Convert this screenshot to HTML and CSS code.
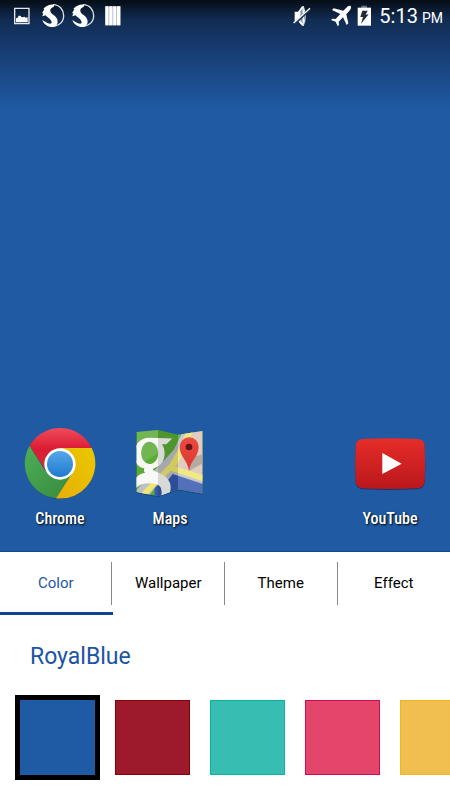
FILE: index.html
```html
<!DOCTYPE html>
<html lang="en">
<head>
    <meta charset="UTF-8">
    <meta name="viewport" content="width=device-width, initial-scale=1.0">
    <title>Launcher Settings</title>
    <link rel="stylesheet" href="styles.css">
</head>
<body>
    <main class="home">
        <header class="status-bar">
            <div class="status-left">
                <!-- screenshot -->
                <svg class="icon-picture" width="16" height="18" viewBox="43 20 48 54">
                    <path fill="none" stroke="#e6e8ec" stroke-width="4" d="M45 24h43v46H45z"/>
                    <path fill="#fff" d="M49 66V54l5-2 3-6h5l3 4 5 1 4-2 4 3 6-1v15z"/>
                </svg>
                <svg width="24" height="24" viewBox="122 12 72 72">
                    <path fill="none" stroke="#dde2ea" stroke-width="4" d="M158 14c20 0 32 16 32 33 0 19-15 32-34 32"/>
                    <path fill="#fff" d="M163 14c-14-2-26 3-34 13l3 1-7 12 4-1-3 10 10-3c6 8 17 12 18 20 1 9-12 5-28-6 4 13 16 21 30 21 14-1 19-13 14-25-5-11-22-14-20-26 1-6 6-8 11-10-2-3-1-4 2-6z"/>
                </svg>
                <svg width="24" height="24" viewBox="122 12 72 72">
                    <path fill="none" stroke="#dde2ea" stroke-width="4" d="M158 14c20 0 32 16 32 33 0 19-15 32-34 32"/>
                    <path fill="#fff" d="M163 14c-14-2-26 3-34 13l3 1-7 12 4-1-3 10 10-3c6 8 17 12 18 20 1 9-12 5-28-6 4 13 16 21 30 21 14-1 19-13 14-25-5-11-22-14-20-26 1-6 6-8 11-10-2-3-1-4 2-6z"/>
                </svg>
                <svg class="icon-bars" width="16" height="20" viewBox="0 0 48 60">
                    <path fill="#b9c1cd" d="M1 1h45v57H1z"/>
                    <path fill="#fff" d="M1 1h9v57H1zM13 1h9v57h-9zM25 1h8v57h-8zM36 1h10v57H36z"/>
                </svg>
            </div>
            <div class="status-right">
                <!-- muted -->
                <svg width="18" height="22" viewBox="44 14 54 66">
                    <path fill="#fff" d="M49 34h10l12-16h6v58h-6L59 62H49z"/>
                    <path fill="#8f9db3" d="M66 33l7-9v46l-7-9z"/>
                    <path fill="none" stroke="#dde2ea" stroke-width="4" d="M75 20q11 27 0 54"/>
                    <path stroke="#14305c" stroke-width="8" d="M48 70l47-44"/>
                    <path stroke="#fff" stroke-width="4" d="M46 68l49-44"/>
                </svg>
                <!-- airplane mode -->
                <svg class="icon-plane" width="20" height="22" viewBox="158 15 60 66">
                    <path fill="#fff" d="M217 18c-5-2-9 1-13 5l-9 9-29-7-5 5 25 12-14 15-10-1-4 4 14 5 6 14 4-4-1-10 13-13 11 23 5-5-6-27 8-9c4-5 8-10 5-16z"/>
                </svg>
                <!-- battery charging -->
                <svg class="icon-battery" width="14" height="22" viewBox="236 13 42 66">
                    <path fill="#68717f" d="M249 15h17v7h-17z"/>
                    <path fill="#fff" d="M238 21h40v54h-40z"/>
                    <path fill="#222a35" d="M252 30h16l-6 12 9-1-23 28 6-20h-8z"/>
                </svg>
                <div class="clock">5:13 <span class="clock-period">PM</span></div>
            </div>
        </header>

        <nav class="apps">
            <a class="app" href="#chrome">
                <svg class="app-icon" viewBox="42 36 216 216">
                    <defs>
                        <linearGradient id="chrome-red" x1="0" y1="0" x2="0" y2="1">
                            <stop offset="0" stop-color="#f04b5a"/>
                            <stop offset=".5" stop-color="#db1c33"/>
                            <stop offset="1" stop-color="#c9303b"/>
                        </linearGradient>
                        <linearGradient id="chrome-green" x1="0" y1="0" x2="1" y2="1">
                            <stop offset="0" stop-color="#4fae55"/>
                            <stop offset="1" stop-color="#358a3d"/>
                        </linearGradient>
                        <linearGradient id="chrome-yellow" x1="0" y1="1" x2="1" y2="0">
                            <stop offset="0" stop-color="#e9ae08"/>
                            <stop offset="1" stop-color="#e9c800"/>
                        </linearGradient>
                        <linearGradient id="chrome-blue" x1="0" y1="0" x2="0" y2="1">
                            <stop offset="0" stop-color="#56a6e8"/>
                            <stop offset="1" stop-color="#1f7bd0"/>
                        </linearGradient>
                    </defs>
                    <circle cx="150" cy="147" r="105" fill="#163f78"/>
                    <path fill="url(#chrome-green)" d="M59 92a105 105 0 0 0 79 158l55-84-43-21-44 23z"/>
                    <path fill="url(#chrome-yellow)" d="M150 99h95a105 105 0 0 1-107 151l53-82z"/>
                    <path fill="url(#chrome-red)" d="M59 92a105 105 0 0 1 186 7h-95l-45 65z"/>
                    <circle cx="150" cy="147" r="47" fill="#fff"/>
                    <circle cx="150" cy="147" r="39" fill="url(#chrome-blue)"/>
                </svg>
                <span class="app-name">Chrome</span>
            </a>
            <a class="app" href="#maps">
                <svg class="app-icon" viewBox="42 36 216 216">
                    <defs>
                        <clipPath id="maps-sheet">
                            <path d="M49 51l65-6 60 14 74-11v188l-74-13-59 21-66-13z"/>
                        </clipPath>
                        <linearGradient id="maps-pin" x1="0" y1="0" x2="0" y2="1">
                            <stop offset="0" stop-color="#ec4a43"/>
                            <stop offset="1" stop-color="#d8382f"/>
                        </linearGradient>
                    </defs>
                    <path fill="#1a4580" d="M49 54l65-6 60 14 75-11v188l-75-13-59 21-66-13z"/>
                    <g clip-path="url(#maps-sheet)">
                        <path fill="#5aaa35" d="M40 40h220v210H40z"/>
                        <path fill="#dcc5b4" d="M160 150l50-110h44v156l-94-36z"/>
                        <path fill="#a89c8f" d="M206 168l18-44 26-6v26z"/>
                        <path fill="#bec0c6" d="M49 225l112-120 30-60h14l-36 84-20 30-60 80H49z"/>
                        <path fill="#3558ae" d="M104 248v-28l44-42 24-4 78 24v50z"/>
                        <path fill="#bec0c6" d="M150 165l100 30v12l-92-30-26 34-10-10z"/>
                        <path fill="#eee66f" d="M58 240l90-92 26-44 28-60h20l-46 98-12 12 86 26v19l-98-32-76 78z"/>
                        <!-- letter on the sheet -->
                        <path fill="#f8f9f6" stroke="#f8f9f6" stroke-width="4" fill-rule="evenodd" d="M88 70l64 2-14 14h-15c15 22 12 62-20 71-10 4-9 10 4 15 32 11 49 30 41 60l-22 10c4-25-6-36-22-38-22-3-42-1-55 12v-27c9-10 20-13 29-14-5-6-5-12-2-17-46-1-44-88 12-88zm-4 8c-31 8-31 70 6 71 38-4 35-73-6-71z"/>
                        <path fill="#fff" opacity=".15" d="M49 45h65v70l-65 40zM174 45h76v205h-76z"/>
                        <path fill="#000" opacity=".12" d="M114 45l60 14v164l-60 22z"/>
                    </g>
                    <path fill="url(#maps-pin)" d="M207 168c-4-32-28-43-28-72a28 29 0 0 1 57 0c0 28-24 41-29 72z"/>
                    <circle cx="207" cy="96" r="10" fill="#641512"/>
                </svg>
                <span class="app-name">Maps</span>
            </a>
            <a class="app app-last" href="#youtube">
                <svg class="app-icon" viewBox="42 36 216 216">
                    <defs>
                        <linearGradient id="youtube-red" x1="0" y1="0" x2="0" y2="1">
                            <stop offset="0" stop-color="#e62d28"/>
                            <stop offset="1" stop-color="#b9171c"/>
                        </linearGradient>
                    </defs>
                    <path fill="#18386f" d="M67 75q83-5 167 0 19 2 20 20 4 53 0 107-1 19-20 21-84 4-167 0-19-2-20-21-4-54 0-107 1-18 20-20z"/>
                    <path fill="url(#youtube-red)" d="M67 72q83-4 167 0 19 2 20 20 3 53 0 107-1 19-20 21-84 4-167 0-19-2-20-21-3-54 0-107 1-18 20-20z"/>
                    <path fill="#fff" d="M127 114l58 32-58 31z"/>
                </svg>
                <span class="app-name">YouTube</span>
            </a>
        </nav>
    </main>

    <section class="panel">
        <div class="tabs" role="tablist">
            <button class="tab active" type="button" role="tab" aria-selected="true">Color</button>
            <button class="tab" type="button" role="tab" aria-selected="false">Wallpaper</button>
            <button class="tab" type="button" role="tab" aria-selected="false">Theme</button>
            <button class="tab" type="button" role="tab" aria-selected="false">Effect</button>
        </div>
        <h1 class="color-name">RoyalBlue</h1>
        <div class="swatches">
            <button class="swatch royal-blue selected" type="button" aria-label="Royal blue"></button>
            <button class="swatch dark-red" type="button" aria-label="Dark red"></button>
            <button class="swatch turquoise" type="button" aria-label="Turquoise"></button>
            <button class="swatch pink" type="button" aria-label="Pink"></button>
            <button class="swatch yellow" type="button" aria-label="Yellow"></button>
        </div>
    </section>
</body>
</html>
```
FILE: styles.css
```css
* {
    box-sizing: border-box;
}

body {
    display: flex;
    flex-direction: column;
    min-height: 100vh;
    margin: 0;
    background-color: #fff;
    font-family: Roboto, "Noto Sans", sans-serif;
}

button {
    padding: 0;
    border: 0;
    font-family: inherit;
    cursor: pointer;
}

.home {
    display: flex;
    flex-direction: column;
    justify-content: space-between;
    flex: 1;
    border-bottom: 1px solid #0e4694;
    background: linear-gradient(#050d16 0, #112c52 20px, #153668 40px, #1a4783 70px, #1f5aa3 110px);
}

.status-bar {
    display: flex;
    justify-content: space-between;
    height: 32px;
    padding: 0 7px 0 14px;
}

.status-left,
.status-right {
    display: flex;
    align-items: center;
}

.status-left {
    gap: 6px;
}

.icon-picture {
    margin-right: 5px;
}

.icon-bars {
    margin-left: 4px;
}

.icon-plane {
    margin-left: 20px;
}

.icon-battery {
    margin-left: 6px;
}

.clock {
    display: flex;
    align-items: baseline;
    gap: 4px;
    padding-top: 2px;
    margin-left: 8px;
    color: #fff;
    font-size: 20px;
    line-height: 30px;
}

.clock-period {
    font-size: 14px;
}

.apps {
    display: grid;
    grid-template-columns: repeat(4, 1fr);
    padding: 0 5px 22px;
}

.app {
    display: flex;
    flex-direction: column;
    align-items: center;
    gap: 10px;
    color: #fff;
    text-decoration: none;
}

.app-last {
    grid-column: 4;
}

.app-icon {
    width: 72px;
    height: 72px;
}

.app-name {
    font-family: "Roboto Condensed", Roboto, sans-serif;
    font-size: 16px;
    font-weight: 500;
    line-height: 20px;
    text-shadow: 1px 1px 2px #000;
}

.tabs {
    display: grid;
    grid-template-columns: repeat(4, 1fr);
}

.tab {
    display: flex;
    align-items: center;
    justify-content: center;
    height: 63px;
    padding-top: 2px;
    border-bottom: 3px solid transparent;
    background-color: transparent;
    color: #000;
    font-size: 15px;
}

.tab:not(:last-child)::before {
    content: "";
    margin-right: auto;
}

.tab:not(:last-child)::after {
    content: "";
    width: 1px;
    height: 43px;
    margin-left: auto;
    background-color: #888;
}

.tab.active {
    border-bottom-color: #0d4494;
    color: #1e58a8;
}

.color-name {
    margin: 0;
    padding: 27px 30px 0;
    color: #1b54a4;
    font-size: 23px;
    font-weight: 400;
    line-height: 30px;
}

.swatches {
    display: flex;
    gap: 20px;
    padding: 28px 20px 25px;
    overflow: hidden;
}

.swatch {
    flex: none;
    width: 75px;
    height: 75px;
    border: 1px solid;
}

.royal-blue {
    border-color: #1f5aa5;
    background-color: #1f5aa5;
}

.dark-red {
    border-color: #8b0000;
    background-color: #9c1a2c;
}

.turquoise {
    border-color: #06b5a5;
    background-color: #37bdb2;
}

.pink {
    border-color: #d20a52;
    background-color: #e4456a;
}

.yellow {
    border-color: #efb61f;
    background-color: #f1bf4f;
}

.swatch.selected {
    box-shadow: 0 0 0 5px #000;
}
```
